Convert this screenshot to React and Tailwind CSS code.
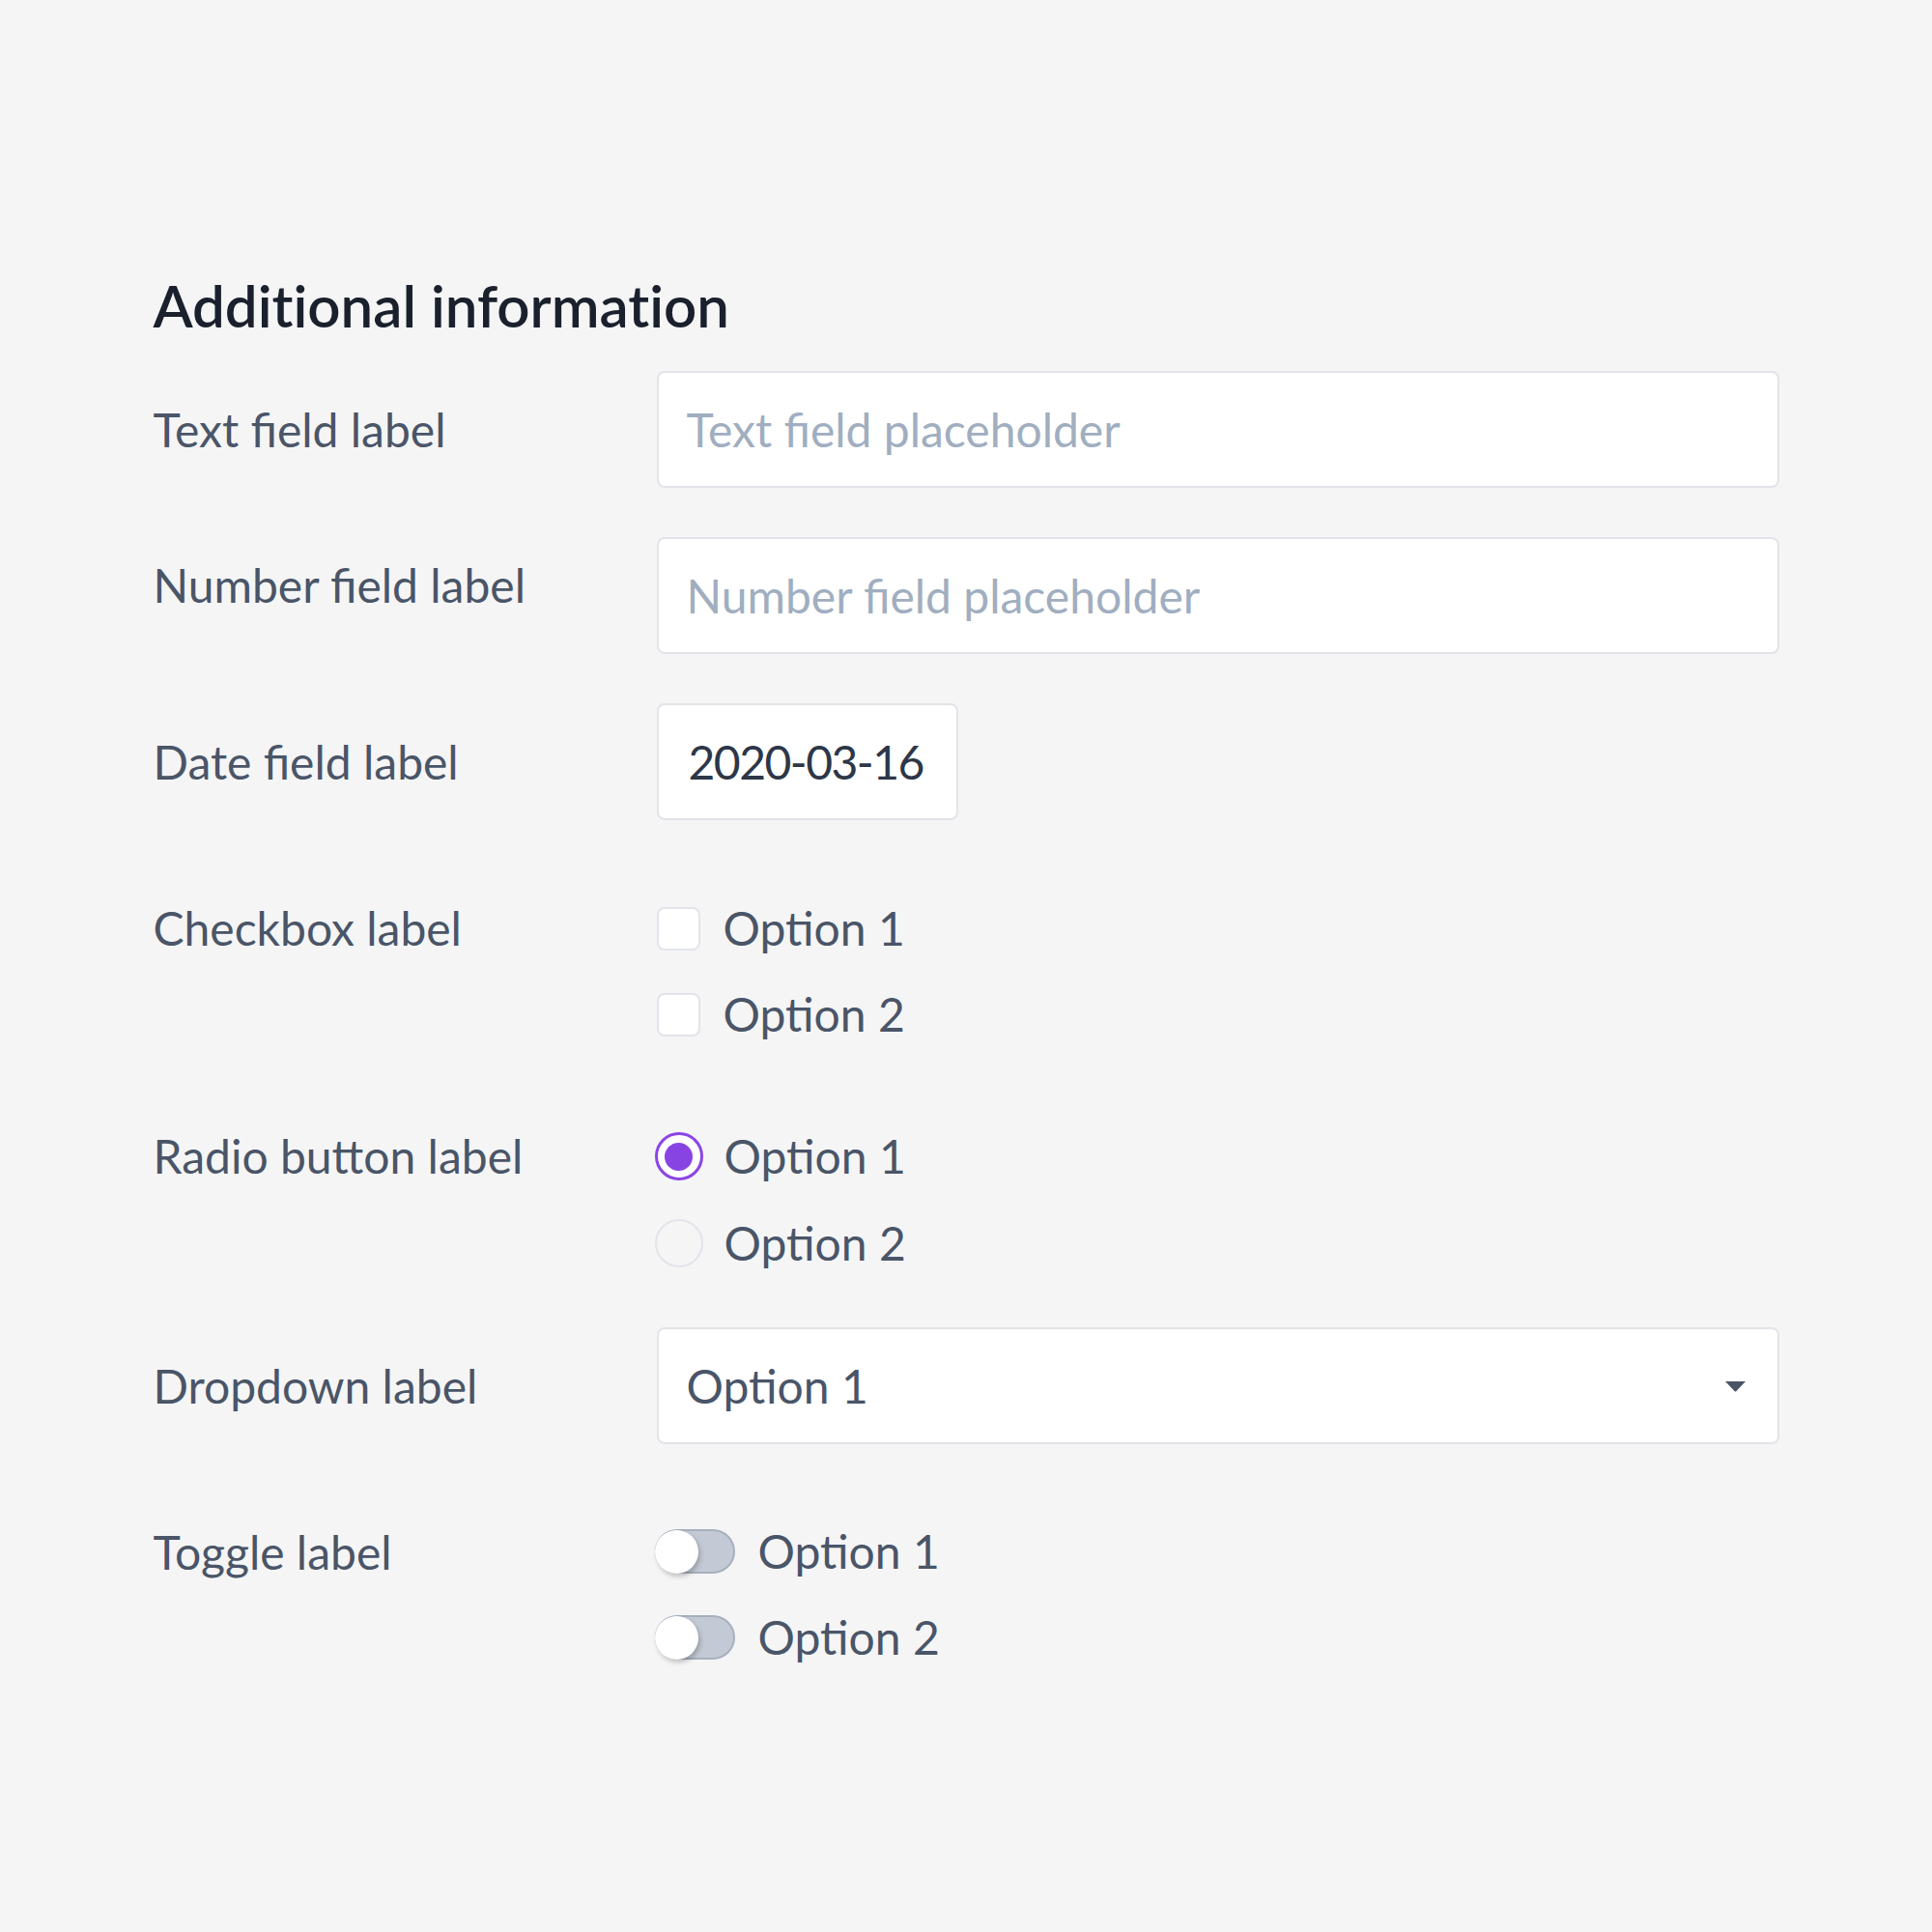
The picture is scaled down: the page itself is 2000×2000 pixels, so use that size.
import React from "react";

const labelCls = "w-[521px] shrink-0 text-[48px] leading-[48px] text-[#4a5568]";
const optionCls = "text-[48px] leading-[48px] text-[#4a5568]";

function Checkbox({ label }) {
    return (
        <div className="flex h-[48px] items-center gap-6">
            <div className="h-[45px] w-[45px] rounded-lg border-2 border-[#e2e4ea] bg-white" />
            <span className={optionCls}>{label}</span>
        </div>
    );
}

function Radio({ label, checked }) {
    return (
        <div className="-ml-[2px] flex h-[50px] items-center gap-[22px]">
            {checked ? (
                <div className="flex h-[50px] w-[50px] items-center justify-center rounded-full border-[3px] border-[#8b45e6] bg-white">
                    <div className="h-[29px] w-[29px] rounded-full bg-[#8844e2]" />
                </div>
            ) : (
                <div className="h-[50px] w-[50px] rounded-full border-2 border-[#e2e4ea] bg-transparent" />
            )}
            <span className={optionCls}>{label}</span>
        </div>
    );
}

function Toggle({ label }) {
    return (
        <div className="-ml-[2px] flex h-[46px] items-center gap-6">
            <div className="flex h-[46px] w-[83px] items-center rounded-full border-2 border-[#a7b0be] bg-[#c3cad5]">
                <div className="-ml-[2px] h-[45px] w-[45px] rounded-full bg-white shadow-[2px_3px_5px_rgba(0,0,0,0.22)]" />
            </div>
            <span className={optionCls}>{label}</span>
        </div>
    );
}

export default function App() {
    return (
        <div className="min-h-screen bg-[#f5f5f6] font-['Lato','Liberation_Sans',sans-serif]">
            <div className="mx-auto w-[1683px] pt-[286px]">
                <h1 className="text-[60px] font-semibold leading-none text-[#1a202c] [font-variant-ligatures:none]">
                    Additional information
                </h1>

                {/* text field */}
                <div className="mt-[38px] flex items-center">
                    <label className={labelCls}>Text field label</label>
                    <input
                        className="h-[121px] w-[1162px] rounded-lg border-2 border-[#e2e4e9] bg-white px-[29px] text-[48px] text-[#4a5568] outline-none placeholder:text-[#a0aec0]"
                        placeholder="Text field placeholder"
                    />
                </div>

                {/* number field */}
                <div className="mt-[51px] flex items-start">
                    <label className={labelCls + " mt-[26px]"}>Number field label</label>
                    <input
                        className="h-[121px] w-[1162px] rounded-lg border-2 border-[#e2e4e9] bg-white px-[29px] text-[48px] text-[#4a5568] outline-none placeholder:text-[#a0aec0]"
                        placeholder="Number field placeholder"
                    />
                </div>

                {/* date */}
                <div className="mt-[51px] flex items-center">
                    <label className={labelCls}>Date field label</label>
                    <div className="flex h-[121px] w-[312px] items-center whitespace-nowrap rounded-lg border-2 border-[#e2e4e9] bg-white pl-[31px] text-[48px] tracking-[-1.5px] text-[#2d3748]">
                        2020-03-16
                    </div>
                </div>

                {/* checkboxes */}
                <div className="mt-[88px] flex items-start">
                    <label className={labelCls}>Checkbox label</label>
                    <div className="flex flex-col gap-[41px]">
                        <Checkbox label="Option 1" />
                        <Checkbox label="Option 2" />
                    </div>
                </div>

                {/* radios */}
                <div className="mt-[98px] flex items-start">
                    <label className={labelCls + " leading-[50px]"}>Radio button label</label>
                    <div className="flex flex-col gap-[40px]">
                        <Radio label="Option 1" checked />
                        <Radio label="Option 2" />
                    </div>
                </div>

                {/* dropdown */}
                <div className="mt-[62px] flex items-center">
                    <label className={labelCls}>Dropdown label</label>
                    <div className="flex h-[121px] w-[1162px] items-center justify-between rounded-lg border-2 border-[#e2e4e9] bg-white pl-[29px] pr-[32px] text-[48px] text-[#4a5568]">
                        <span>Option 1</span>
                        <svg width="23" height="12" viewBox="0 0 23 12">
                            <path d="M1 1 H22 L12.5 11 Q11.5 12 10.5 11 Z" fill="#4a5568" />
                        </svg>
                    </div>
                </div>

                {/* toggles */}
                <div className="mt-[88px] flex items-start">
                    <label className={labelCls + " leading-[46px]"}>Toggle label</label>
                    <div className="flex flex-col gap-[43px]">
                        <Toggle label="Option 1" />
                        <Toggle label="Option 2" />
                    </div>
                </div>
            </div>
        </div>
    );
}
